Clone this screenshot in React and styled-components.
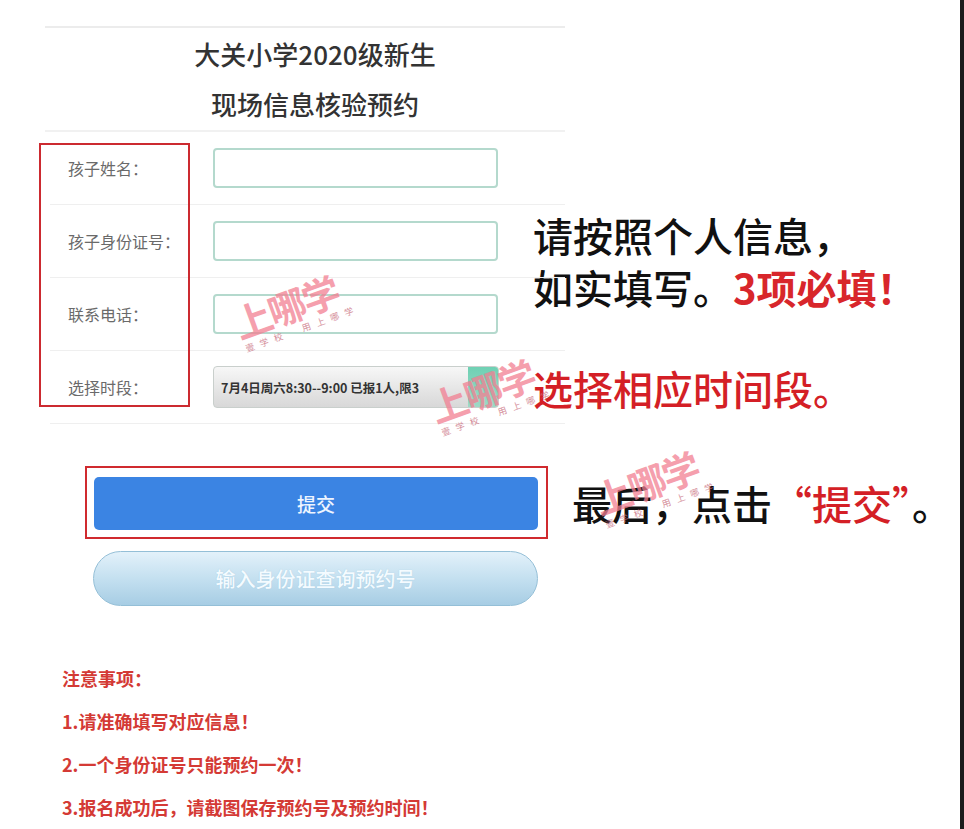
import React from 'react';
import styled, { createGlobalStyle } from 'styled-components';

const GlobalStyle = createGlobalStyle`
  html, body {
    margin: 0;
    padding: 0;
    background: #ffffff;
    font-family: "Noto Sans CJK SC", "Noto Sans", sans-serif;
    overflow: hidden;
  }
`;

const fields = [
  { label: '孩子姓名：' },
  { label: '孩子身份证号：' },
  { label: '联系电话：' },
];

const notes = [
  '1.请准确填写对应信息！',
  '2.一个身份证号只能预约一次！',
  '3.报名成功后，请截图保存预约号及预约时间！',
];

// watermark positions on the picture
const marks = [
  { left: 228, top: 306 },
  { left: 424, top: 390 },
  { left: 588, top: 482 },
];

function App() {
  return (
    <Page>
      <GlobalStyle />
      <Panel>
        <Header>
          <Title>大关小学2020级新生</Title>
          <Title>现场信息核验预约</Title>
        </Header>
        <Form>
          <LabelFrame />
          {fields.map((f) => (
            <Row key={f.label}>
              <Label>{f.label}</Label>
              <Input type="text" />
            </Row>
          ))}
          <Row>
            <Label>选择时段：</Label>
            <Select>
              <SelectText>7月4日周六8:30--9:00 已报1人,限3</SelectText>
              <SelectArrow />
            </Select>
          </Row>
        </Form>
        <SubmitFrame>
          <SubmitButton>提交</SubmitButton>
        </SubmitFrame>
        <QueryButton>输入身份证查询预约号</QueryButton>
        <Notes>
          <Note>注意事项：</Note>
          {notes.map((n) => (
            <Note key={n}>{n}</Note>
          ))}
        </Notes>
      </Panel>
      <Side>
        <Tip>请按照个人信息，</Tip>
        <Tip>
          如实填写。<Must>3项必填！</Must>
        </Tip>
        <Tip $red $gap={49}>选择相应时间段。</Tip>
        <Tip $gap={63} $indent={39}>
          最后，点击<Red>“提交”</Red>。
        </Tip>
      </Side>
      {marks.map((m, i) => (
        <Mark key={i} style={{ left: m.left, top: m.top }}>
          <MarkBig>上哪学</MarkBig>
          <MarkSmall>壹学校　用上哪学</MarkSmall>
        </Mark>
      ))}
    </Page>
  );
}

const Page = styled.div`
  position: relative;
  display: flex;
  width: 100%;
  height: 100vh;
  min-height: 829px;
  box-sizing: border-box;
  border-right: 4px solid #1c1c1c;
  overflow: hidden;
`;

const Panel = styled.div`
  width: 520px;
  flex-shrink: 0;
  margin: 26px 0 0 45px;
  border-top: 2px solid #ececec;
`;

const Header = styled.div`
  padding-top: 1px;
  height: 101px;
  border-bottom: 2px solid #f1f1f1;
`;

const Title = styled.div`
  height: 50px;
  line-height: 50px;
  text-align: center;
  font-size: 26px;
  font-weight: 500;
  color: #333;
  margin-left: 20px;
`;

const Form = styled.div`
  position: relative;
`;

const LabelFrame = styled.div`
  position: absolute;
  left: -6px;
  top: 11px;
  width: 151px;
  height: 264px;
  border: 2px solid #cc2a30;
  box-sizing: border-box;
  pointer-events: none;
`;

const Row = styled.div`
  display: flex;
  align-items: center;
  height: 72px;
  border-bottom: 1px solid #efefef;
  margin-left: 5px;
`;

const Label = styled.div`
  width: 163px;
  padding-left: 18px;
  box-sizing: border-box;
  font-size: 16px;
  color: #6a6a6a;
  white-space: nowrap;
`;

const Input = styled.input`
  width: 285px;
  height: 40px;
  box-sizing: border-box;
  border: 2px solid #b4d9cd;
  border-radius: 4px;
  background: #fff;
  outline: none;
`;

const Select = styled.div`
  display: flex;
  width: 286px;
  height: 42px;
  box-sizing: border-box;
  border: 1px solid #c9cfcc;
  border-radius: 4px;
  overflow: hidden;
  background: linear-gradient(#f7f7f7, #e4e4e4 60%, #d8d8d8);
`;

const SelectText = styled.div`
  flex: 1;
  display: flex;
  align-items: center;
  padding-left: 7px;
  font-size: 12.5px;
  font-weight: 700;
  color: #333;
  white-space: nowrap;
  overflow: hidden;
`;

const SelectArrow = styled.div`
  width: 30px;
  background: linear-gradient(#6fd1b4, #9ed9c6);
`;

const SubmitFrame = styled.div`
  width: 463px;
  margin: 42px 0 0 40px;
  padding: 9px 8px 7px 7px;
  border: 2px solid #d02a2f;
  box-sizing: border-box;
`;

const SubmitButton = styled.div`
  height: 53px;
  line-height: 53px;
  border-radius: 5px;
  background: #3b84e3;
  color: #eef5ff;
  text-align: center;
  font-size: 19px;
  font-weight: 500;
`;

const QueryButton = styled.div`
  width: 445px;
  height: 55px;
  margin: 12px 0 0 48px;
  box-sizing: border-box;
  border: 1px solid #94bfd7;
  border-radius: 28px;
  background: linear-gradient(#e3f1fa, #c4e0f0 50%, #a7cde4);
  color: #f4fbff;
  text-align: center;
  line-height: 53px;
  font-size: 20px;
  font-weight: 500;
  text-shadow: 0 0 1px #9ec6dc;
`;

const Notes = styled.div`
  margin: 51px 0 0 17px;
`;

const Note = styled.div`
  height: 43px;
  line-height: 43px;
  font-size: 18px;
  font-weight: 700;
  color: #d43a35;
  white-space: nowrap;
`;

const Side = styled.div`
  padding-top: 209px;
  margin-left: -32px;
`;

const Tip = styled.div`
  margin-top: ${(p) => p.$gap || 0}px;
  padding-left: ${(p) => p.$indent || 0}px;
  height: 52px;
  font-size: 40px;
  line-height: 52px;
  font-weight: 500;
  color: ${(p) => (p.$red ? '#d41f26' : '#111')};
  white-space: nowrap;
`;

const Must = styled.span`
  color: #d8262b;
  font-weight: 700;
`;

const Red = styled.span`
  color: #d41f26;
`;

const Mark = styled.div`
  position: absolute;
  transform: rotate(-20deg);
  transform-origin: left top;
  pointer-events: none;
  opacity: 0.75;
`;

const MarkBig = styled.div`
  font-size: 38px;
  font-weight: 700;
  line-height: 40px;
  color: #f27f92;
  letter-spacing: -2px;
`;

const MarkSmall = styled.div`
  font-size: 9px;
  color: #c86a7a;
  letter-spacing: 6px;
  padding-left: 2px;
`;

export default App;
